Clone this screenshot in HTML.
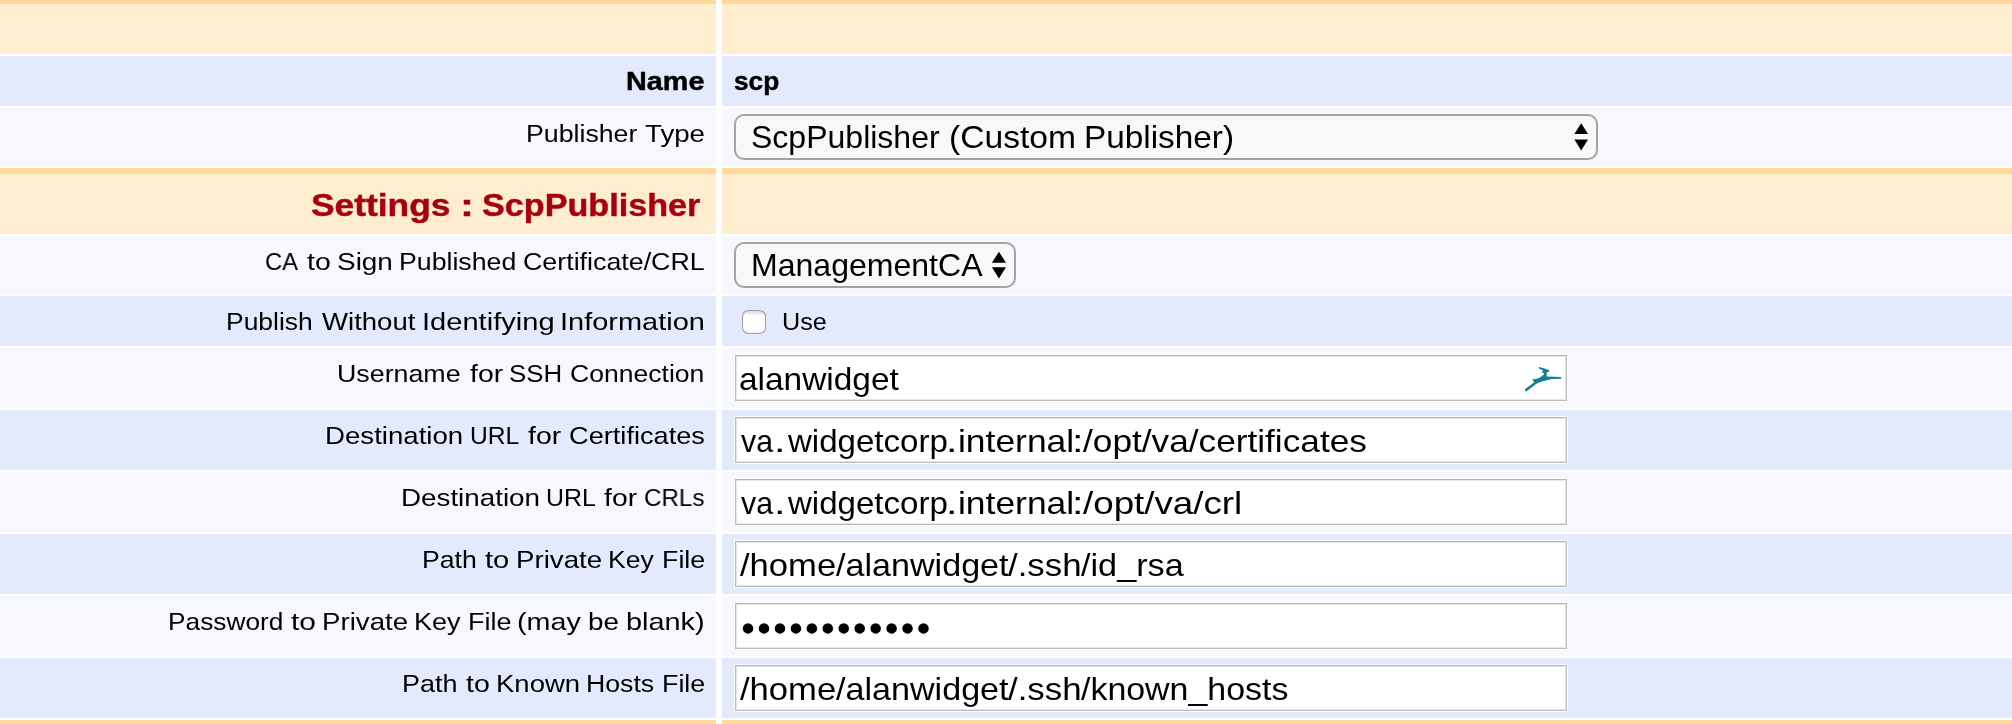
<!DOCTYPE html><html><head><meta charset="utf-8"><style>
html,body{margin:0;padding:0;width:2012px;height:724px;overflow:hidden;background:#fff;}
div,span{position:absolute;}
.t{will-change:transform;font-family:"Liberation Sans",sans-serif;white-space:nowrap;line-height:1;color:#000;}
.in{background:#fff;box-sizing:border-box;border:1px solid #BABABA;border-top-color:#B4B4B4;box-shadow:0 0 0 1px #fff, inset 0 0 0 1px #E6E6E6;}
.sel{background:#F8F8F8;box-sizing:border-box;border:2px solid #A3A3A3;border-radius:10px;}
</style></head><body>
<div style="left:0px;top:0px;width:716px;height:54px;background:#FEEDCF;border-top:4px solid #FED99A;box-sizing:border-box"></div>
<div style="left:722px;top:0px;width:1290px;height:54px;background:#FEEDCF;border-top:4px solid #FED99A;box-sizing:border-box"></div>
<div style="left:0px;top:56px;width:716px;height:50px;background:#E4EAFD"></div>
<div style="left:722px;top:56px;width:1290px;height:50px;background:#E4EAFD"></div>
<div style="left:0px;top:108px;width:716px;height:58px;background:#F7F8FE"></div>
<div style="left:722px;top:108px;width:1290px;height:58px;background:#F7F8FE"></div>
<div style="left:0px;top:168px;width:716px;height:66px;background:#FEEDCF;border-top:6px solid #FED99A;box-sizing:border-box"></div>
<div style="left:722px;top:168px;width:1290px;height:66px;background:#FEEDCF;border-top:6px solid #FED99A;box-sizing:border-box"></div>
<div style="left:0px;top:236px;width:716px;height:58px;background:#F7F8FE"></div>
<div style="left:722px;top:236px;width:1290px;height:58px;background:#F7F8FE"></div>
<div style="left:0px;top:296px;width:716px;height:50px;background:#E4EAFD"></div>
<div style="left:722px;top:296px;width:1290px;height:50px;background:#E4EAFD"></div>
<div style="left:0px;top:348px;width:716px;height:60px;background:#F7F8FE"></div>
<div style="left:722px;top:348px;width:1290px;height:60px;background:#F7F8FE"></div>
<div style="left:0px;top:410px;width:716px;height:60px;background:#E4EAFD"></div>
<div style="left:722px;top:410px;width:1290px;height:60px;background:#E4EAFD"></div>
<div style="left:0px;top:472px;width:716px;height:60px;background:#F7F8FE"></div>
<div style="left:722px;top:472px;width:1290px;height:60px;background:#F7F8FE"></div>
<div style="left:0px;top:534px;width:716px;height:60px;background:#E4EAFD"></div>
<div style="left:722px;top:534px;width:1290px;height:60px;background:#E4EAFD"></div>
<div style="left:0px;top:596px;width:716px;height:60px;background:#F7F8FE"></div>
<div style="left:722px;top:596px;width:1290px;height:60px;background:#F7F8FE"></div>
<div style="left:0px;top:658px;width:716px;height:60px;background:#E4EAFD"></div>
<div style="left:722px;top:658px;width:1290px;height:60px;background:#E4EAFD"></div>
<div style="left:0px;top:720px;width:716px;height:4px;background:#FEEDCF;border-top:4px solid #FED99A;box-sizing:border-box"></div>
<div style="left:722px;top:720px;width:1290px;height:4px;background:#FEEDCF;border-top:4px solid #FED99A;box-sizing:border-box"></div>
<div class="sel" style="left:734px;top:114px;width:864px;height:46px"></div>
<div class="sel" style="left:734px;top:242px;width:282px;height:46px"></div>
<div class="in" style="left:735px;top:355px;width:832px;height:46px"></div>
<div class="in" style="left:735px;top:417px;width:832px;height:46px"></div>
<div class="in" style="left:735px;top:479px;width:832px;height:46px"></div>
<div class="in" style="left:735px;top:541px;width:832px;height:46px"></div>
<div class="in" style="left:735px;top:603px;width:832px;height:46px"></div>
<div class="in" style="left:735px;top:665px;width:832px;height:46px"></div>
<div class="t" style="left:626.07px;top:68.84px;font-size:25px;font-weight:700;color:#000;-webkit-text-stroke:0.45px #000;transform:scaleX(1.1513);transform-origin:0 0">Name</div>
<div class="t" style="left:734.05px;top:68.84px;font-size:25px;font-weight:700;color:#000;-webkit-text-stroke:0.45px #000;transform:scaleX(1.0499);transform-origin:0 0">scp</div>
<div class="t" style="left:526.43px;top:122.18px;font-size:24.6px;font-weight:400;color:#000;transform:scaleX(1.086);transform-origin:0 0">Publisher</div>
<div class="t" style="left:644.87px;top:122.18px;font-size:24.6px;font-weight:400;color:#000;transform:scaleX(1.1255);transform-origin:0 0">Type</div>
<div class="t" style="left:310.66px;top:189.76px;font-size:31px;font-weight:700;color:#A8000F;-webkit-text-stroke:0.45px #A8000F;transform:scaleX(1.14);transform-origin:0 0">Settings</div>
<div class="t" style="left:459.5px;top:189.76px;font-size:31px;font-weight:700;color:#A8000F;-webkit-text-stroke:0.45px #A8000F;transform:scaleX(1.35);transform-origin:0 0">:</div>
<div class="t" style="left:482.2px;top:189.76px;font-size:31px;font-weight:700;color:#A8000F;-webkit-text-stroke:0.45px #A8000F;transform:scaleX(1.102);transform-origin:0 0">ScpPublisher</div>
<div class="t" style="left:264.53px;top:250.18px;font-size:24.6px;font-weight:400;color:#000;transform:scaleX(0.9667);transform-origin:0 0">CA</div>
<div class="t" style="left:306.5px;top:250.18px;font-size:24.6px;font-weight:400;color:#000;transform:scaleX(1.1579);transform-origin:0 0">to</div>
<div class="t" style="left:337.33px;top:250.18px;font-size:24.6px;font-weight:400;color:#000;transform:scaleX(1.1356);transform-origin:0 0">Sign</div>
<div class="t" style="left:398.93px;top:250.18px;font-size:24.6px;font-weight:400;color:#000;transform:scaleX(1.0856);transform-origin:0 0">Published</div>
<div class="t" style="left:523.31px;top:250.18px;font-size:24.6px;font-weight:400;color:#000;transform:scaleX(1.0897);transform-origin:0 0">Certificate/CRL</div>
<div class="t" style="left:226.15px;top:310.18px;font-size:24.6px;font-weight:400;color:#000;transform:scaleX(1.0753);transform-origin:0 0">Publish</div>
<div class="t" style="left:322.0px;top:310.18px;font-size:24.6px;font-weight:400;color:#000;transform:scaleX(1.1205);transform-origin:0 0">Without</div>
<div class="t" style="left:421.94px;top:310.18px;font-size:24.6px;font-weight:400;color:#000;transform:scaleX(1.1824);transform-origin:0 0">Identifying</div>
<div class="t" style="left:560.24px;top:310.18px;font-size:24.6px;font-weight:400;color:#000;transform:scaleX(1.1782);transform-origin:0 0">Information</div>
<div class="t" style="left:337.22px;top:362.18px;font-size:24.6px;font-weight:400;color:#000;transform:scaleX(1.0891);transform-origin:0 0">Username</div>
<div class="t" style="left:469.6px;top:362.18px;font-size:24.6px;font-weight:400;color:#000;transform:scaleX(1.1536);transform-origin:0 0">for</div>
<div class="t" style="left:509.3px;top:362.18px;font-size:24.6px;font-weight:400;color:#000;transform:scaleX(1.0522);transform-origin:0 0">SSH</div>
<div class="t" style="left:569.82px;top:362.18px;font-size:24.6px;font-weight:400;color:#000;transform:scaleX(1.0795);transform-origin:0 0">Connection</div>
<div class="t" style="left:324.55px;top:424.18px;font-size:24.6px;font-weight:400;color:#000;transform:scaleX(1.1235);transform-origin:0 0">Destination</div>
<div class="t" style="left:469.9px;top:424.18px;font-size:24.6px;font-weight:400;color:#000;transform:scaleX(1.0);transform-origin:0 0">URL</div>
<div class="t" style="left:527.7px;top:424.18px;font-size:24.6px;font-weight:400;color:#000;transform:scaleX(1.1536);transform-origin:0 0">for</div>
<div class="t" style="left:568.5px;top:424.18px;font-size:24.6px;font-weight:400;color:#000;transform:scaleX(1.105);transform-origin:0 0">Certificates</div>
<div class="t" style="left:400.64px;top:486.18px;font-size:24.6px;font-weight:400;color:#000;transform:scaleX(1.1294);transform-origin:0 0">Destination</div>
<div class="t" style="left:546.07px;top:486.18px;font-size:24.6px;font-weight:400;color:#000;transform:scaleX(1.013);transform-origin:0 0">URL</div>
<div class="t" style="left:604.0px;top:486.18px;font-size:24.6px;font-weight:400;color:#000;transform:scaleX(1.1536);transform-origin:0 0">for</div>
<div class="t" style="left:644.32px;top:486.18px;font-size:24.6px;font-weight:400;color:#000;transform:scaleX(0.9831);transform-origin:0 0">CRLs</div>
<div class="t" style="left:421.73px;top:548.18px;font-size:24.6px;font-weight:400;color:#000;transform:scaleX(1.083);transform-origin:0 0">Path</div>
<div class="t" style="left:485.1px;top:548.18px;font-size:24.6px;font-weight:400;color:#000;transform:scaleX(1.1842);transform-origin:0 0">to</div>
<div class="t" style="left:515.65px;top:548.18px;font-size:24.6px;font-weight:400;color:#000;transform:scaleX(1.126);transform-origin:0 0">Private</div>
<div class="t" style="left:608.24px;top:548.18px;font-size:24.6px;font-weight:400;color:#000;transform:scaleX(1.08);transform-origin:0 0">Key</div>
<div class="t" style="left:661.82px;top:548.18px;font-size:24.6px;font-weight:400;color:#000;transform:scaleX(1.0917);transform-origin:0 0">File</div>
<div class="t" style="left:168.36px;top:610.18px;font-size:24.6px;font-weight:400;color:#000;transform:scaleX(1.0683);transform-origin:0 0">Password</div>
<div class="t" style="left:291.4px;top:610.18px;font-size:24.6px;font-weight:400;color:#000;transform:scaleX(1.2158);transform-origin:0 0">to</div>
<div class="t" style="left:321.95px;top:610.18px;font-size:24.6px;font-weight:400;color:#000;transform:scaleX(1.1247);transform-origin:0 0">Private</div>
<div class="t" style="left:413.8px;top:610.18px;font-size:24.6px;font-weight:400;color:#000;transform:scaleX(1.1);transform-origin:0 0">Key</div>
<div class="t" style="left:467.61px;top:610.18px;font-size:24.6px;font-weight:400;color:#000;transform:scaleX(1.0972);transform-origin:0 0">File</div>
<div class="t" style="left:517.27px;top:610.18px;font-size:24.6px;font-weight:400;color:#000;transform:scaleX(1.1673);transform-origin:0 0">(may</div>
<div class="t" style="left:588.33px;top:610.18px;font-size:24.6px;font-weight:400;color:#000;transform:scaleX(1.1333);transform-origin:0 0">be</div>
<div class="t" style="left:626.05px;top:610.18px;font-size:24.6px;font-weight:400;color:#000;transform:scaleX(1.1746);transform-origin:0 0">blank)</div>
<div class="t" style="left:402.1px;top:672.18px;font-size:24.6px;font-weight:400;color:#000;transform:scaleX(1.0979);transform-origin:0 0">Path</div>
<div class="t" style="left:465.7px;top:672.18px;font-size:24.6px;font-weight:400;color:#000;transform:scaleX(1.1579);transform-origin:0 0">to</div>
<div class="t" style="left:496.26px;top:672.18px;font-size:24.6px;font-weight:400;color:#000;transform:scaleX(1.1183);transform-origin:0 0">Known</div>
<div class="t" style="left:586.33px;top:672.18px;font-size:24.6px;font-weight:400;color:#000;transform:scaleX(1.085);transform-origin:0 0">Hosts</div>
<div class="t" style="left:661.82px;top:672.18px;font-size:24.6px;font-weight:400;color:#000;transform:scaleX(1.0917);transform-origin:0 0">File</div>
<div class="t" style="left:782.0px;top:310.38px;font-size:24.6px;font-weight:400;color:#000;transform:scaleX(1.0253);transform-origin:0 0">Use</div>
<div class="t" style="left:751.1px;top:122.18px;font-size:30.5px;font-weight:400;color:#000;transform:scaleX(1.0497);transform-origin:0 0">ScpPublisher</div>
<div class="t" style="left:949.49px;top:122.18px;font-size:30.5px;font-weight:400;color:#000;transform:scaleX(1.1027);transform-origin:0 0">(Custom</div>
<div class="t" style="left:1084.02px;top:122.18px;font-size:30.5px;font-weight:400;color:#000;transform:scaleX(1.0924);transform-origin:0 0">Publisher)</div>
<div class="t" style="left:750.94px;top:250.48px;font-size:30.5px;font-weight:400;color:#000;transform:scaleX(1.0505);transform-origin:0 0">ManagementCA</div>
<div class="t" style="left:738.94px;top:364.38px;font-size:30.5px;font-weight:400;color:#000;transform:scaleX(1.0957);transform-origin:0 0">alanwidget</div>
<div class="t" style="left:741.4px;top:426.38px;font-size:30.5px;font-weight:400;color:#000;transform:scaleX(0.9938);transform-origin:0 0">va</div>
<div class="t" style="left:774.22px;top:426.38px;font-size:30.5px;font-weight:400;color:#000;transform:scaleX(1.35);transform-origin:0 0">.</div>
<div class="t" style="left:788.3px;top:426.38px;font-size:30.5px;font-weight:400;color:#000;transform:scaleX(1.0836);transform-origin:0 0">widgetcorp</div>
<div class="t" style="left:946.42px;top:426.38px;font-size:30.5px;font-weight:400;color:#000;transform:scaleX(1.35);transform-origin:0 0">.</div>
<div class="t" style="left:957.68px;top:426.38px;font-size:30.5px;font-weight:400;color:#000;transform:scaleX(1.1615);transform-origin:0 0">internal</div>
<div class="t" style="left:1071.73px;top:426.38px;font-size:30.5px;font-weight:400;color:#000;transform:scaleX(1.35);transform-origin:0 0">:</div>
<div class="t" style="left:1083.4px;top:426.38px;font-size:30.5px;font-weight:400;color:#000;transform:scaleX(1.1549);transform-origin:0 0">/opt/va/certificates</div>
<div class="t" style="left:741.4px;top:488.38px;font-size:30.5px;font-weight:400;color:#000;transform:scaleX(0.9938);transform-origin:0 0">va</div>
<div class="t" style="left:774.22px;top:488.38px;font-size:30.5px;font-weight:400;color:#000;transform:scaleX(1.35);transform-origin:0 0">.</div>
<div class="t" style="left:788.3px;top:488.38px;font-size:30.5px;font-weight:400;color:#000;transform:scaleX(1.0836);transform-origin:0 0">widgetcorp</div>
<div class="t" style="left:946.42px;top:488.38px;font-size:30.5px;font-weight:400;color:#000;transform:scaleX(1.35);transform-origin:0 0">.</div>
<div class="t" style="left:957.68px;top:488.38px;font-size:30.5px;font-weight:400;color:#000;transform:scaleX(1.1615);transform-origin:0 0">internal</div>
<div class="t" style="left:1071.73px;top:488.38px;font-size:30.5px;font-weight:400;color:#000;transform:scaleX(1.35);transform-origin:0 0">:</div>
<div class="t" style="left:1083.4px;top:488.38px;font-size:30.5px;font-weight:400;color:#000;transform:scaleX(1.2046);transform-origin:0 0">/opt/va/crl</div>
<div class="t" style="left:740.3px;top:550.38px;font-size:30.5px;font-weight:400;color:#000;transform:scaleX(1.1349);transform-origin:0 0">/home</div>
<div class="t" style="left:835.5px;top:550.38px;font-size:30.5px;font-weight:400;color:#000;transform:scaleX(1.1182);transform-origin:0 0">/alanwidget</div>
<div class="t" style="left:1008.4px;top:550.38px;font-size:30.5px;font-weight:400;color:#000;transform:scaleX(1.1419);transform-origin:0 0">/.ssh</div>
<div class="t" style="left:1081.3px;top:550.38px;font-size:30.5px;font-weight:400;color:#000;transform:scaleX(1.122);transform-origin:0 0">/id_rsa</div>
<div class="t" style="left:740.3px;top:674.38px;font-size:30.5px;font-weight:400;color:#000;transform:scaleX(1.1349);transform-origin:0 0">/home</div>
<div class="t" style="left:835.5px;top:674.38px;font-size:30.5px;font-weight:400;color:#000;transform:scaleX(1.1182);transform-origin:0 0">/alanwidget</div>
<div class="t" style="left:1008.4px;top:674.38px;font-size:30.5px;font-weight:400;color:#000;transform:scaleX(1.1419);transform-origin:0 0">/.ssh</div>
<div class="t" style="left:1081.3px;top:674.38px;font-size:30.5px;font-weight:400;color:#000;transform:scaleX(1.1119);transform-origin:0 0">/known_hosts</div>
<svg style="position:absolute;left:0;top:0" width="2012" height="724" viewBox="0 0 2012 724"><path d="M1574.4,134 L1581.2,123.2 L1588,134 Z" fill="#000"/><path d="M1574.4,139.6 L1581.2,150.5 L1588,139.6 Z" fill="#000"/><path d="M991.9,262.8 L998.95,251.7 L1006,262.8 Z" fill="#000"/><path d="M991.9,267.3 L998.95,278.5 L1006,267.3 Z" fill="#000"/><defs><linearGradient id="cbg" x1="0" y1="0" x2="0" y2="1"><stop offset="0" stop-color="#d4d4d4"/><stop offset="0.22" stop-color="#fdfdfd"/><stop offset="0.8" stop-color="#ffffff"/><stop offset="1" stop-color="#ececec"/></linearGradient></defs><rect x="742.5" y="310.5" width="23" height="23" rx="6" fill="url(#cbg)" stroke="#a2a2a2" stroke-width="1.1"/><path transform="translate(1520,362)" d="M4.9,27.3 L14.2,20.3 L12.2,17.45 Q17.5,16.9 19.9,15.5 Q22.8,13.8 24.1,12.1 L23.7,11.1 L22.0,10.7 L21.8,10.1 L23.2,8.4 L19.1,6.6 Q18.5,5.6 18.9,5.1 Q25,6.6 29.2,8.2 Q30,9.1 28.6,9.9 L26.8,10.1 Q26.3,12.3 26.8,14.4 L40.9,15.1 Q41.9,15.9 40.6,16.7 L32.4,17.1 Q22,18.8 15.7,22.2 L6.3,29.4 Q4.7,29.2 4.9,27.3 Z" fill="#127E98"/><circle cx="748.05" cy="628.4" r="5.25" fill="#000"/><circle cx="764.00" cy="628.4" r="5.25" fill="#000"/><circle cx="779.95" cy="628.4" r="5.25" fill="#000"/><circle cx="795.90" cy="628.4" r="5.25" fill="#000"/><circle cx="811.85" cy="628.4" r="5.25" fill="#000"/><circle cx="827.80" cy="628.4" r="5.25" fill="#000"/><circle cx="843.75" cy="628.4" r="5.25" fill="#000"/><circle cx="859.70" cy="628.4" r="5.25" fill="#000"/><circle cx="875.65" cy="628.4" r="5.25" fill="#000"/><circle cx="891.60" cy="628.4" r="5.25" fill="#000"/><circle cx="907.55" cy="628.4" r="5.25" fill="#000"/><circle cx="923.50" cy="628.4" r="5.25" fill="#000"/></svg>
</body></html>
